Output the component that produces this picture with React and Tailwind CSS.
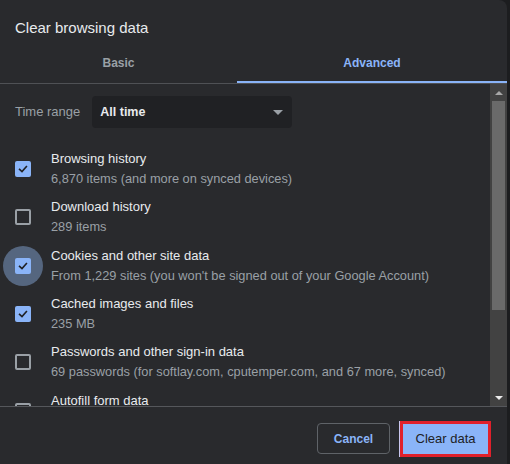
import React from 'react';

const items = [
  { title: 'Browsing history', sub: '6,870 items (and more on synced devices)', checked: true },
  { title: 'Download history', sub: '289 items', checked: false },
  { title: 'Cookies and other site data', sub: "From 1,229 sites (you won't be signed out of your Google Account)", checked: true, focused: true },
  { title: 'Cached images and files', sub: '235 MB', checked: true },
  { title: 'Passwords and other sign-in data', sub: '69 passwords (for softlay.com, cputemper.com, and 67 more, synced)', checked: false },
  { title: 'Autofill form data', sub: '', checked: false },
];

const Checkbox = ({ checked, focused }) => (
  <div className="relative w-[16px] h-[16px] shrink-0">
    {focused && (
      <div className="absolute left-[-12px] top-[-12px] w-[40px] h-[40px] rounded-full bg-[#55667f]" />
    )}
    {checked ? (
      <div className="relative w-[16px] h-[16px] rounded-[2px] bg-[#8ab4f8]">
        <svg viewBox="0 0 16 16" className="w-[16px] h-[16px]">
          <path d="M4.6 8.4 L7 10.6 L11.4 5.6" fill="none" stroke="#202124" strokeWidth="1.6" strokeLinecap="square" />
        </svg>
      </div>
    ) : (
      <div className="relative w-[16px] h-[16px] rounded-[2px] border-2 border-[#9aa0a6]" />
    )}
  </div>
);

const Row = ({ item }) => (
  <div className="h-[48.3px] shrink-0 flex items-center gap-[20px]">
    <Checkbox checked={item.checked} focused={item.focused} />
    <div className="flex flex-col">
      <div className="h-[20px] text-[13px] leading-[20px] text-[#e8eaed]">{item.title}</div>
      <div className="h-[20px] text-[12.8px] leading-[20px] text-[#9aa0a6] whitespace-nowrap">{item.sub}</div>
    </div>
  </div>
);

export default function App() {
  return (
    <div className="w-[510px] h-[464px] bg-[#1c1d1f] overflow-hidden" style={{ fontFamily: '"Liberation Sans", Arial, sans-serif' }}>
      <div className="w-[507px] h-[464px] bg-[#292a2d] rounded-tr-[8px] flex flex-col">
        <div className="h-[45px] shrink-0 pl-[15px] pt-[17px] text-[15px] leading-[22px] text-[#e8eaed]">
          Clear browsing data
        </div>

        <div className="h-[39px] shrink-0 flex border-b border-[#4f5155]">
          <div className="w-[237px] flex flex-col">
            <div className="h-[36px] flex items-center justify-center text-[12px] font-bold text-[#9aa0a6]">Basic</div>
          </div>
          <div className="flex-1 flex flex-col">
            <div className="h-[36px] flex items-center justify-center text-[12px] font-bold text-[#8ab4f8]">Advanced</div>
            <div className="h-[2px] bg-[#8ab4f8]" />
          </div>
        </div>

        <div className="h-[322px] shrink-0 flex overflow-hidden">
          <div className="flex-1 flex flex-col pl-[15px] pt-[12px] overflow-hidden">
            <div className="flex items-center gap-[12px] shrink-0">
              <span className="text-[13px] text-[#9aa0a6]">Time range</span>
              <div className="w-[200px] h-[32px] rounded-[4px] bg-[#202124] flex items-center justify-between pl-[8px] pr-[9px]">
                <span className="text-[12.5px] font-bold text-[#e8eaed]">All time</span>
                <svg viewBox="0 0 10 5" className="w-[10px] h-[5px]">
                  <path d="M0 0 L10 0 L5 5 Z" fill="#9aa0a6" />
                </svg>
              </div>
            </div>
            <div className="h-[17px] shrink-0" />
            {items.map((item) => (
              <Row key={item.title} item={item} />
            ))}
          </div>

          <div className="w-[17px] shrink-0 bg-[#424242] flex flex-col items-center">
            <div className="h-[17px] flex items-center justify-center">
              <svg viewBox="0 0 8 4" className="w-[8px] h-[4px]">
                <path d="M0 4 L8 4 L4 0 Z" fill="#a8a8a8" />
              </svg>
            </div>
            <div className="w-[13px] h-[209px] bg-[#6a6a6a]" />
            <div className="flex-1" />
            <div className="h-[17px] flex items-center justify-center">
              <svg viewBox="0 0 8 4" className="w-[8px] h-[4px]">
                <path d="M0 0 L8 0 L4 4 Z" fill="#ececec" />
              </svg>
            </div>
          </div>
        </div>

        <div className="h-px shrink-0 bg-[#55575b]" />

        <div className="flex-1 flex justify-end items-start pt-[14px] pr-[16px] gap-[9px]">
          <button className="mt-[2px] w-[73px] h-[31px] rounded-[4px] border border-[#5f6368] text-[12px] font-bold text-[#8ab4f8]">
            Cancel
          </button>
          <div className="border-l border-[#c8c6ee]">
            <div className="w-[91px] h-[36px] border-[3px] border-[#e0202b]">
              <button className="w-full h-full bg-[#8ab4f8] text-[13px] text-[#202124]">Clear data</button>
            </div>
          </div>
        </div>
      </div>
    </div>
  );
}
